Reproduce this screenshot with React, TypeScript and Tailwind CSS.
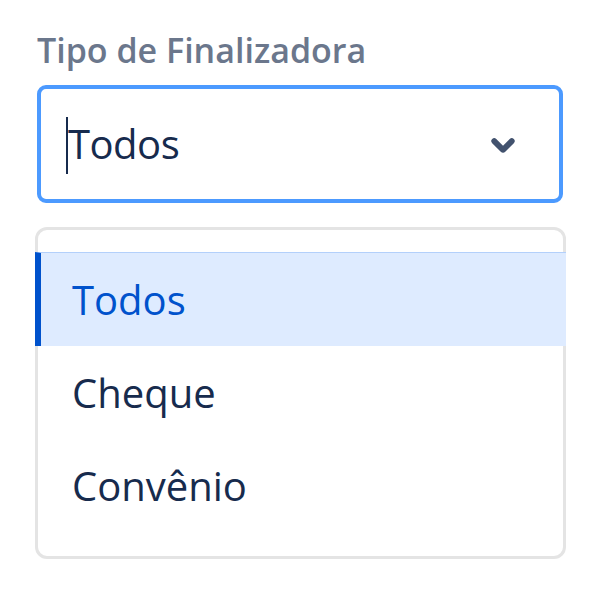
import { useState } from "react";

const options = ["Todos", "Cheque", "Convênio"];

function ChevronDown() {
  return (
    <svg viewBox="0 0 24 24" className="h-[70px] w-[70px]" role="presentation">
      <path
        fill="#42526e"
        d="M8.292 10.293a1.009 1.009 0 0 0 0 1.419l2.939 2.965c.218.215.5.322.779.322s.556-.107.769-.322l2.93-2.955a1.01 1.01 0 0 0 0-1.419.987.987 0 0 0-1.406 0l-2.298 2.317-2.307-2.327a.99.99 0 0 0-1.406 0z"
      />
    </svg>
  );
}

export default function App() {
  const [selected] = useState("Todos");

  return (
    <div
      className="min-h-screen bg-white px-[37px] pt-[24px]"
      style={{ fontFamily: '"Open Sans", "Noto Sans", sans-serif' }}
    >
      <label className="block text-[34px] font-semibold leading-[52px] text-[#6b778c]">
        Tipo de Finalizadora
      </label>

      {/* Control */}
      <div className="mt-[9px] flex h-[118px] w-[526px] items-center rounded-[9px] border-[4px] border-[#4c9aff] bg-white pl-[24px] pr-[21px]">
        <div className="relative flex flex-1 items-center">
          <span className="absolute left-[1px] top-[-3px] h-[57px] w-[2px] bg-[#172b4d]" />
          <span className="pl-[3px] text-[40px] leading-[48px] tracking-[-0.5px] text-[#172b4d]">
            {selected}
          </span>
        </div>
        <div className="flex items-center">
          <ChevronDown />
        </div>
      </div>

      {/* Menu */}
      <div className="-ml-[2px] mt-[24px] w-[531px] rounded-[12px] border-[3px] border-[#e4e4e4] bg-white pb-[24px] pt-[22px]">
        {options.map((opt) => {
          const active = opt === selected;
          return (
            <div
              key={opt}
              className={
                active
                  ? "-mx-[3px] flex h-[94px] items-center border-t border-[#b3d0fb] border-l-[6px] border-l-[#0052cc] bg-[#deebff] pl-[31px] text-[40px] text-[#0052cc]"
                  : "flex h-[93px] items-center pl-[34px] text-[40px] text-[#172b4d]"
              }
            >
              {opt}
            </div>
          );
        })}
      </div>
    </div>
  );
}
